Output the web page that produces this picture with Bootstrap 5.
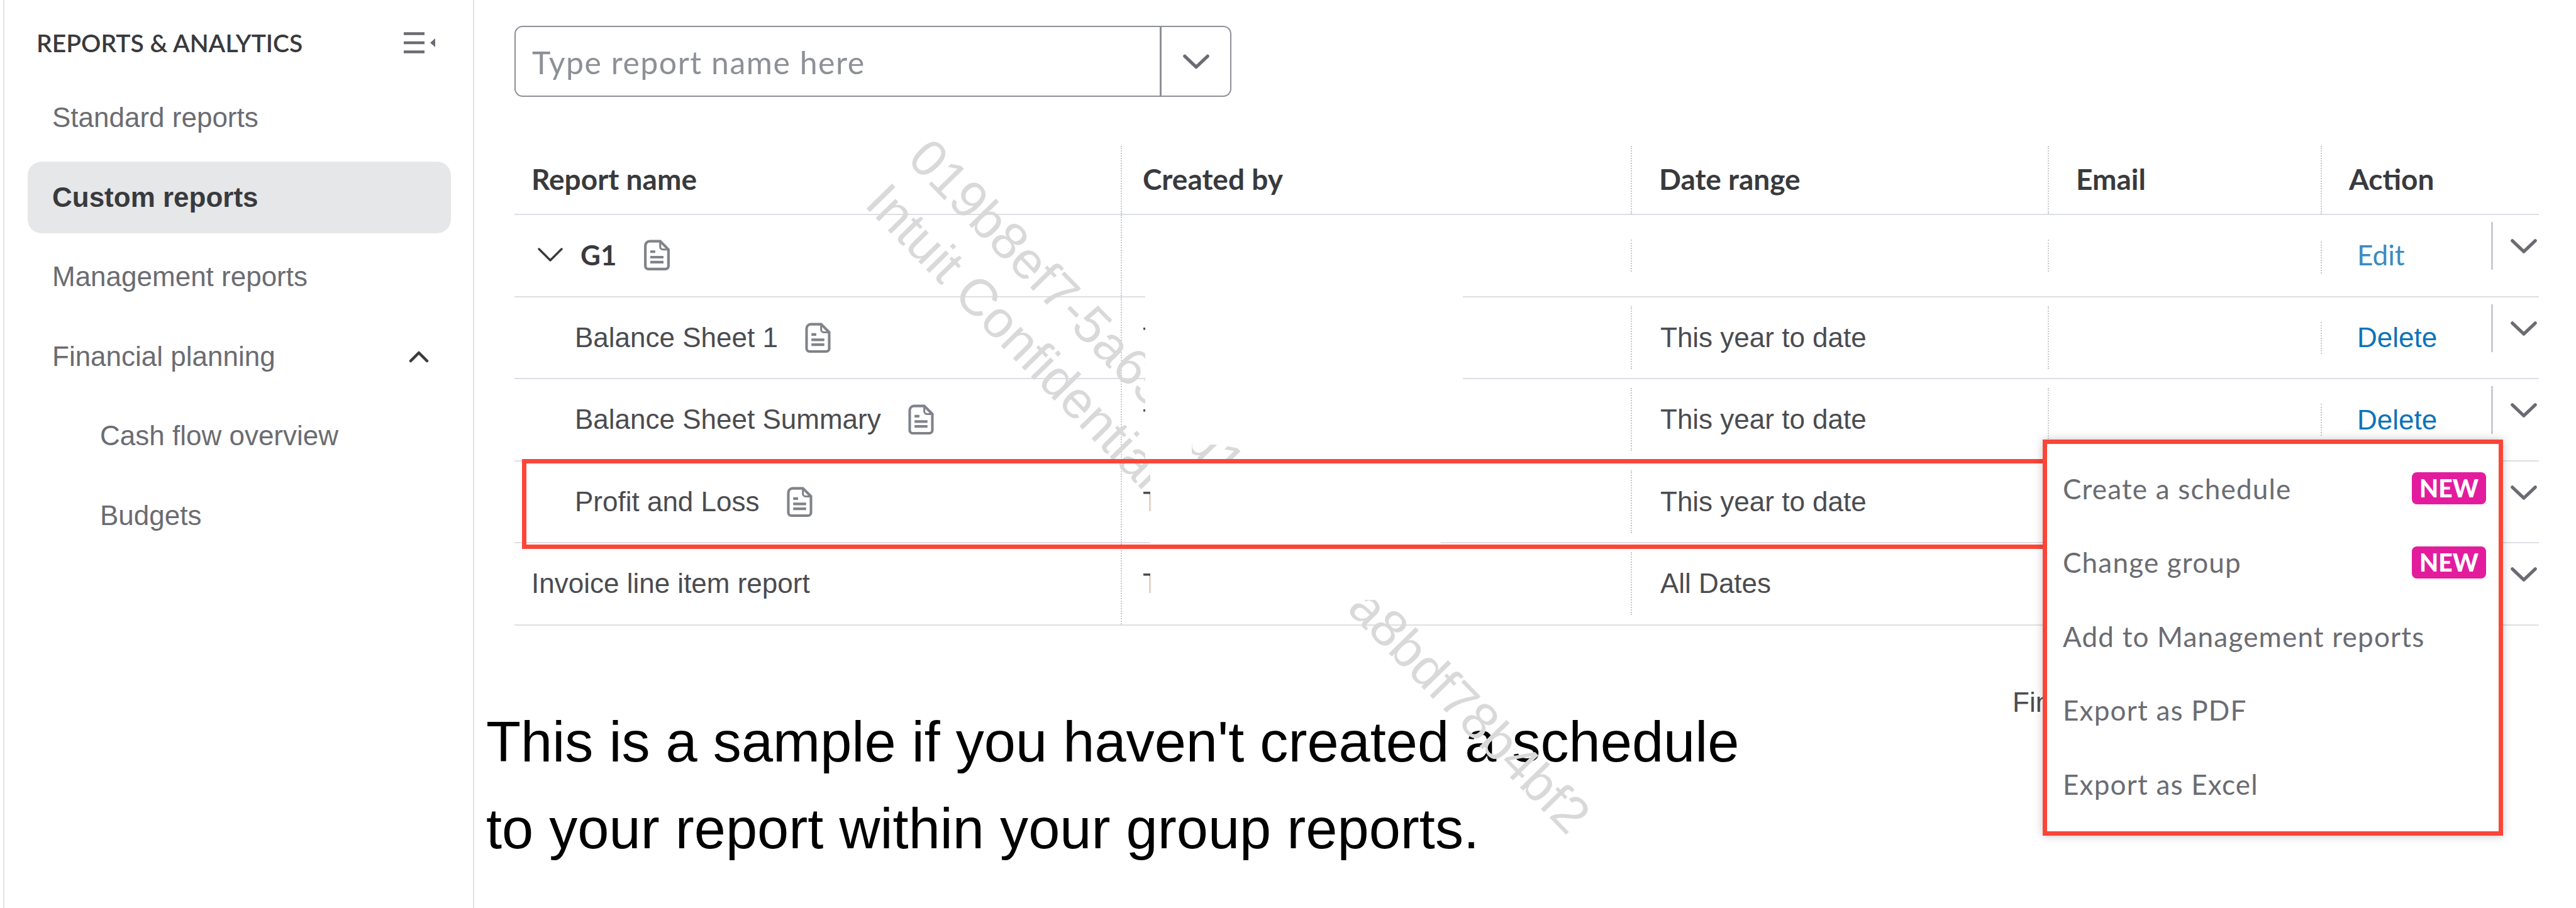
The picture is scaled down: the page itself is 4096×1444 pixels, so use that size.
<!DOCTYPE html>
<html lang="en">
<head>
<meta charset="utf-8">
<title>Custom reports</title>
<link href="https://cdn.jsdelivr.net/npm/bootstrap@5.3.0/dist/css/bootstrap.min.css" rel="stylesheet">
<style>
html,body{width:4096px;height:1444px;overflow:hidden;background:#fff;}
body{font-family:"Liberation Sans",Arial,sans-serif;font-size:44px;color:#4b4c50;position:relative;}
.app-shell{height:1444px;}
.side{width:749px;margin-left:5px;border-left:2px solid #e0e3e7;border-right:2px solid #dfe2e7;flex:none;padding:0 35px 0 37px;}
.side-head{height:130px;padding:6px 25px 0 14px;}
.side-title{font-family:Lato,"Liberation Sans",sans-serif;font-size:39px;font-weight:600;color:#393a3d;text-transform:uppercase;}
.side-nav{gap:12.6px;}
.side-nav .nav-link{height:114px;padding:0 35px 0 39px;display:flex;align-items:center;justify-content:space-between;color:#6b6c72;border-radius:22px;font-size:44px;}
.side-nav .nav-link.active{background:#e5e7e9;color:#393a3d;font-weight:700;}
.side-nav .nav-link.sub{padding-left:115px;}
.main-pane{padding-left:19px;min-width:0;flex:1;}
.pad-wrap{margin-left:45px;}
.search-box{width:1140px;margin-top:41px;height:113px;}
.search-box .form-control{height:113px;font-family:Lato,"Liberation Sans",sans-serif;font-size:50px;letter-spacing:1.5px;border:2.5px solid #8d9096;border-radius:13px 0 0 13px;padding:3px 26px 0;color:#393a3d;box-shadow:none;}
.search-box .form-control::placeholder{color:#8d9096;opacity:1;}
.search-box .btn{width:113px;flex:none;height:113px;border:2.5px solid #8d9096;border-left-width:2.5px;border-radius:0 13px 13px 0;background:#fff;padding:0;display:flex;align-items:center;justify-content:center;}
.rep-table{width:3219px;table-layout:fixed;margin:78px 0 0;border-collapse:collapse;--bs-table-border-color:#dcdfe4;}
.rep-table th,.rep-table td{padding:0;border-bottom:2.5px solid #dcdfe4;vertical-align:middle;font-size:44px;color:#4b4c50;}
.rep-table tr.head-row th{height:108px;font-family:Lato,"Liberation Sans",sans-serif;font-weight:700;color:#393a3d;font-size:46px;}
.rep-table tbody tr td{height:128.5px;}
.rep-table .first-col{border-right:2px dotted #c6c9ce;}
.cin{border-left:2px dotted #c6c9ce;display:flex;align-items:center;padding-left:45px;}
.cin-head{height:108px;padding-left:43px;padding-bottom:3px;}
.cin-tall{height:100px;}
.cin-short{height:51px;}
.name-head{padding-left:27px;padding-bottom:3px;}
.name-group{padding-left:37px;gap:0;margin-top:-2px;}
.name-sub{padding-left:96px;gap:42px;}
.name-plain{padding-left:27px;}
.group-label{font-family:Lato,"Liberation Sans",sans-serif;font-weight:700;color:#393a3d;margin:0 43px 0 28px;}
.creator{padding-left:33px;}
.head-row .creator{padding-bottom:3px;}
.act-cell{height:128.5px;}
.act-cin{width:271px;flex:none;padding-left:56px;margin-top:39px;}
.act-cin.first{margin-top:42px;}
.act-bar{width:2.5px;height:76px;background:#c9ccd1;margin-top:11px;flex:none;}
.act-chev{margin:37px 0 0 27px;flex:none;}
.act-link{color:#0d74b9;text-decoration:none;}
.act-link.light{font-family:Lato,"Liberation Sans",sans-serif;color:#3b8bc0;margin-top:-9px;}
.note-text{width:2427px;margin-top:116px;font-size:90.2px;line-height:138px;color:#000;flex:none;}
.fin-text{margin-top:92px;line-height:60px;}
.mark-line{position:absolute;font-size:82.5px;line-height:82.5px;color:#d9d9d9;white-space:nowrap;transform:rotate(45.6deg);transform-origin:0 50%;z-index:5;pointer-events:none;}
.mark-a{left:1461px;top:194.4px;}
.mark-b{left:1392.6px;top:264.5px;}
.blank-patch{position:absolute;background:#fff;z-index:6;}
.patch-a{left:1821px;top:465px;width:505px;height:242px;}
.patch-b{left:1821px;top:707px;width:74px;height:25px;}
.patch-c{left:1829px;top:735px;width:462px;height:219px;}
.red-row{position:absolute;left:830px;top:729.5px;width:2430px;height:143px;border:7.5px solid #fb4539;z-index:7;}
.act-menu.dropdown-menu{display:block;position:absolute;left:3248px;top:699px;width:732px;height:630px;border:7.5px solid #fb4539;border-radius:0;padding:12px 0 0;margin:0;z-index:8;box-shadow:0 0 14px rgba(0,0,0,.22);background:#fff;}
.act-menu .dropdown-item{height:117.5px;padding:0 20px 0 25px;display:flex;align-items:center;justify-content:space-between;font-family:Lato,"Liberation Sans",sans-serif;font-size:44px;letter-spacing:1.2px;color:#6b6c72;}
.new-tag.badge{background:#e31c9e;color:#fff;width:118px;height:51px;padding:0;border-radius:8px;font-family:Lato,"Liberation Sans",sans-serif;font-size:39px;font-weight:900;letter-spacing:0;line-height:51px;text-align:center;}
</style>
</head>
<body>
<svg width="0" height="0" class="d-none" aria-hidden="true">
  <symbol id="doc-ico" viewBox="0 0 24 28">
    <path d="M5.5 1.500H15l7.500 7.500v15a2.800 2.800 0 0 1-2.800 2.800H4.300A2.800 2.800 0 0 1 1.500 24V5.500a4 4 0 0 1 4-4z" fill="none" stroke="#808389" stroke-width="2.400"/>
    <path d="M15 1.500V6.500a2.500 2.500 0 0 0 2.500 2.500h5" fill="none" stroke="#808389" stroke-width="1.800"/>
    <path d="M6 11h4.500M6 16h12M6 20.500h12" fill="none" stroke="#808389" stroke-width="2.400"/>
  </symbol>
  <symbol id="chev-ico" viewBox="0 0 46 26">
    <path d="M4 4l19 18L42 4" fill="none" stroke="#6b6c72" stroke-width="5.500" stroke-linecap="round" stroke-linejoin="round"/>
  </symbol>
</svg>

<div class="d-flex app-shell">
  <aside class="side">
    <div class="side-head d-flex align-items-center justify-content-between">
      <span class="side-title">Reports &amp; Analytics</span>
      <svg width="50" height="34" viewBox="0 0 50 34" aria-hidden="true"><path d="M0 2.500h33M0 17h33M0 31.500h33" stroke="#6b6c72" stroke-width="4.500"/><path d="M50 10v14l-8-7z" fill="#6b6c72"/></svg>
    </div>
    <nav class="nav flex-column side-nav">
      <a class="nav-link" href="#">Standard reports</a>
      <a class="nav-link active" href="#">Custom reports</a>
      <a class="nav-link" href="#">Management reports</a>
      <a class="nav-link" href="#">Financial planning
        <svg width="32" height="20" viewBox="0 0 32 20" aria-hidden="true"><path d="M3 17L16 4l13 13" fill="none" stroke="#393a3d" stroke-width="4.500" stroke-linecap="round" stroke-linejoin="round"/></svg>
      </a>
      <a class="nav-link sub" href="#">Cash flow overview</a>
      <a class="nav-link sub" href="#">Budgets</a>
    </nav>
  </aside>

  <main class="main-pane">
    <div class="pad-wrap">
      <div class="input-group search-box">
        <input class="form-control" type="text" placeholder="Type report name here">
        <button class="btn" type="button" aria-label="Open"><svg width="44" height="26"><use href="#chev-ico"/></svg></button>
      </div>
      <table class="table rep-table">
        <colgroup><col style="width:965px"><col style="width:810px"><col style="width:663px"><col style="width:434px"><col style="width:347px"></colgroup>
        <thead>
          <tr class="head-row">
            <th class="first-col"><div class="name-head">Report name</div></th>
            <th><div class="creator">Created by</div></th>
            <th><div class="cin cin-head">Date range</div></th>
            <th><div class="cin cin-head">Email</div></th>
            <th><div class="cin cin-head">Action</div></th>
          </tr>
        </thead>
        <tbody>
          <tr>
            <td class="first-col"><div class="d-flex align-items-center name-group">
              <svg width="40" height="22" viewBox="0 0 40 22" aria-hidden="true"><path d="M2 2l18 18L38 2" fill="none" stroke="#393a3d" stroke-width="3.500" stroke-linecap="round" stroke-linejoin="round"/></svg>
              <span class="group-label">G1</span>
              <svg width="43" height="49"><use href="#doc-ico"/></svg>
            </div></td>
            <td></td>
            <td><div class="cin cin-short"></div></td>
            <td><div class="cin cin-short"></div></td>
            <td><div class="d-flex align-items-start act-cell">
              <div class="cin cin-short act-cin first"><a class="act-link light" href="#">Edit</a></div>
              <div class="act-bar"></div><svg class="act-chev" width="44" height="25"><use href="#chev-ico"/></svg>
            </div></td>
          </tr>
          <tr>
            <td class="first-col"><div class="d-flex align-items-center name-sub"><span>Balance Sheet 1</span><svg width="43" height="48"><use href="#doc-ico"/></svg></div></td>
            <td><div class="creator">T</div></td>
            <td><div class="cin cin-tall">This year to date</div></td>
            <td><div class="cin cin-tall"></div></td>
            <td><div class="d-flex align-items-start act-cell">
              <div class="cin cin-short act-cin"><a class="act-link" href="#">Delete</a></div>
              <div class="act-bar"></div><svg class="act-chev" width="44" height="25"><use href="#chev-ico"/></svg>
            </div></td>
          </tr>
          <tr>
            <td class="first-col"><div class="d-flex align-items-center name-sub"><span>Balance Sheet Summary</span><svg width="43" height="48"><use href="#doc-ico"/></svg></div></td>
            <td><div class="creator">T</div></td>
            <td><div class="cin cin-tall">This year to date</div></td>
            <td><div class="cin cin-tall"></div></td>
            <td><div class="d-flex align-items-start act-cell">
              <div class="cin cin-short act-cin"><a class="act-link" href="#">Delete</a></div>
              <div class="act-bar"></div><svg class="act-chev" width="44" height="25"><use href="#chev-ico"/></svg>
            </div></td>
          </tr>
          <tr>
            <td class="first-col"><div class="d-flex align-items-center name-sub"><span>Profit and Loss</span><svg width="43" height="48"><use href="#doc-ico"/></svg></div></td>
            <td><div class="creator">T</div></td>
            <td><div class="cin cin-tall">This year to date</div></td>
            <td></td>
            <td><div class="d-flex align-items-start act-cell">
              <div class="act-cin"></div><div class="act-bar"></div><svg class="act-chev" width="44" height="25"><use href="#chev-ico"/></svg>
            </div></td>
          </tr>
          <tr>
            <td class="first-col"><div class="name-plain">Invoice line item report</div></td>
            <td><div class="creator">T</div></td>
            <td><div class="cin cin-tall">All Dates</div></td>
            <td></td>
            <td><div class="d-flex align-items-start act-cell">
              <div class="act-cin"></div><div class="act-bar"></div><svg class="act-chev" width="44" height="25"><use href="#chev-ico"/></svg>
            </div></td>
          </tr>
        </tbody>
      </table>
    </div>
    <div class="d-flex align-items-start">
      <p class="note-text mb-0">This is a sample if you haven't created a schedule<br>to your report within your group reports.</p>
      <div class="fin-text">Fin</div>
    </div>
  </main>
</div>

<div class="mark-line mark-a">019b8ef7-5a65-4d1c-8e20-a8bdf78b4bf2</div>
<div class="mark-line mark-b">Intuit Confidential</div>
<div class="blank-patch patch-a"></div>
<div class="blank-patch patch-b"></div>
<div class="blank-patch patch-c"></div>
<div class="red-row"></div>
<div class="dropdown-menu act-menu">
  <a class="dropdown-item" href="#"><span>Create a schedule</span><span class="badge new-tag">NEW</span></a>
  <a class="dropdown-item" href="#"><span>Change group</span><span class="badge new-tag">NEW</span></a>
  <a class="dropdown-item" href="#">Add to Management reports</a>
  <a class="dropdown-item" href="#">Export as PDF</a>
  <a class="dropdown-item" href="#">Export as Excel</a>
</div>
<script src="https://cdn.jsdelivr.net/npm/bootstrap@5.3.0/dist/js/bootstrap.bundle.min.js"></script>
</body>
</html>
